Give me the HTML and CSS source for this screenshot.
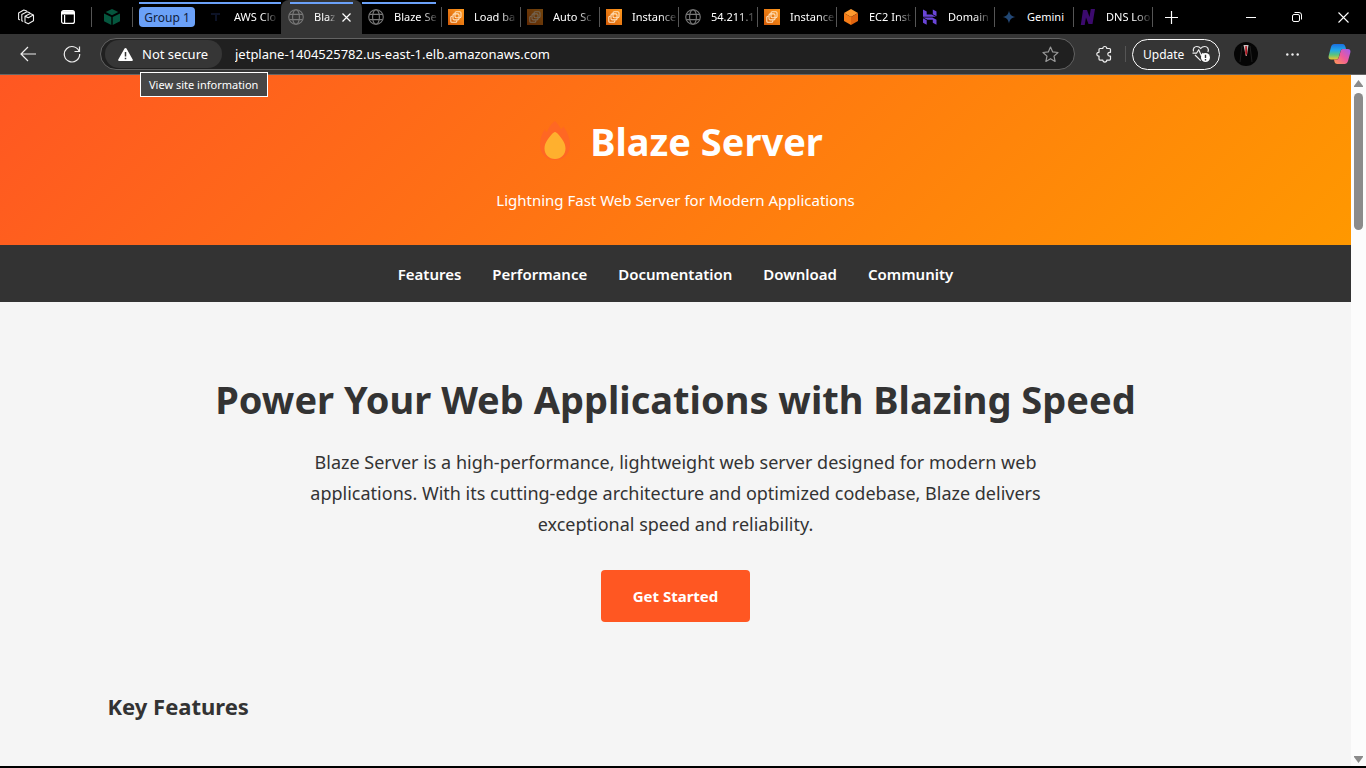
FILE: index.html
```html
<!DOCTYPE html>
<html lang="en">
<head>
<meta charset="utf-8">
<title>Blaze Server</title>
<meta name="viewport" content="width=device-width, initial-scale=1">
<link rel="stylesheet" href="styles.css">
</head>
<body>
<svg class="defs" aria-hidden="true">
  <defs>
    <linearGradient id="aws" x1="0" y1="1" x2="1" y2="0"><stop offset="0" stop-color="#d45b07"/><stop offset="1" stop-color="#ff9a1f"/></linearGradient>
    <linearGradient id="cpA" x1="0" y1="0" x2="0" y2="1"><stop offset="0" stop-color="#1b6fe0"/><stop offset=".4" stop-color="#22a9e8"/><stop offset=".7" stop-color="#5cc47c"/><stop offset="1" stop-color="#f3c52e"/></linearGradient>
    <linearGradient id="cpB" x1="1" y1="0" x2="0" y2="1"><stop offset="0" stop-color="#a05af0"/><stop offset=".5" stop-color="#ee5a9a"/><stop offset="1" stop-color="#ff9a52"/></linearGradient>
    <linearGradient id="gem" x1="0" y1="0" x2="1" y2="1"><stop offset="0" stop-color="#1c4468"/><stop offset="1" stop-color="#274a80"/></linearGradient>
    <symbol id="globe" viewBox="0 0 16 16"><g fill="none" stroke="#777" stroke-width="1.1"><circle cx="8" cy="8" r="7.3"/><ellipse cx="8" cy="8" rx="3.4" ry="7.3"/><path d="M1.3 5.4h13.4M1.3 10.6h13.4"/></g></symbol>
    <symbol id="ec2" viewBox="0 0 16 16"><path fill="url(#aws)" d="M0 0h16v16H0z"/><g fill="none" stroke="#ffe3c0" stroke-width="1.1"><rect x="7" y="2.8" width="6" height="6" rx="1.2"/><rect x="5" y="4.9" width="6" height="6" rx="1.2"/><path d="M4.600 7.200H3.800a1 1 0 0 0-1 1v4a1 1 0 0 0 1 1h4a1 1 0 0 0 1-1v-.8"/></g></symbol>
  </defs>
</svg>

<header class="browser">
  <div class="tabstrip">
    <button class="tool workspaces" aria-label="Workspaces"><svg width="18" height="18" viewBox="0 0 18 18" fill="none" stroke="#eee" stroke-width="1.1" stroke-linejoin="round" stroke-linecap="round"><path d="M8 8.200l5.300-2.700 3.200 1.400v5.800l-5.200 3L8 14.200zM8 8.200l3.300 1.500 5-2.600"/><path d="M5.800 13.200l-1-.5V6.500l5.200-2.800 2.800 1.100"/><path d="M2.600 11.700l-1-.5V5l5.200-3 2.800 1.100"/></svg></button>
    <button class="tool" aria-label="Tab actions"><svg width="14" height="14" viewBox="0 0 14 14" fill="none" stroke="#fff" stroke-width="1.200"><rect x=".6" y=".6" width="12.800" height="12.800" rx="2"/><path d="M1 2.800h12" stroke-width="3.400"/><path d="M3.600 5v8"/></svg></button>
    <button class="tool pinned" aria-label="Pinned tab"><svg width="16" height="16" viewBox="0 0 16 16" fill="#05573e"><path d="M8 0l6.300 3L8 6.200 1.700 3z"/><path d="M0 4.600l7.300 3.500V16L0 12.200zM16 4.600L8.700 8.100V16l7.300-3.800z"/></svg></button>
    <div class="group grouped"><button class="group-chip">Group 1</button>
      <a class="tab-link first" href="#"><svg class="fav" viewBox="0 0 16 16"><path fill="#0d1326" d="M3 4h9v2H9v6H7V6H3z"/></svg><span class="label">AWS Clo</span></a>
    </div>
    <div class="tab active grouped"><a class="tab-link" href="#"><svg class="fav"><use href="#globe"/></svg><span class="label short">Blaz</span></a><button class="close" aria-label="Close tab"><svg width="9" height="9" viewBox="0 0 9 9" stroke="#fff" stroke-width="1.200"><path d="M.5.500l8 8M8.500.500l-8 8"/></svg></button></div>
    <div class="tab grouped last"><a class="tab-link" href="#"><svg class="fav"><use href="#globe"/></svg><span class="label">Blaze Se</span></a></div>
    <div class="tab"><a class="tab-link" href="#"><svg class="fav"><use href="#ec2"/></svg><span class="label">Load ba</span></a></div>
    <div class="tab"><a class="tab-link" href="#"><svg class="fav dim"><use href="#ec2"/></svg><span class="label">Auto Sc</span></a></div>
    <div class="tab"><a class="tab-link" href="#"><svg class="fav"><use href="#ec2"/></svg><span class="label">Instance</span></a></div>
    <div class="tab"><a class="tab-link" href="#"><svg class="fav"><use href="#globe"/></svg><span class="label">54.211.1</span></a></div>
    <div class="tab"><a class="tab-link" href="#"><svg class="fav"><use href="#ec2"/></svg><span class="label">Instance</span></a></div>
    <div class="tab"><a class="tab-link" href="#"><svg class="fav" viewBox="0 0 16 16"><path fill="#ff9a2e" d="M8 0l7 4-7 4-7-4z"/><path fill="#f57c17" d="M1 4l7 4v8l-7-4z"/><path fill="#e0640f" d="M15 4L8 8v8l7-4z"/></svg><span class="label">EC2 Inst</span></a></div>
    <div class="tab"><a class="tab-link" href="#"><svg class="fav" viewBox="0 0 16 16" fill="#6a45d8"><path d="M1 .5l3.700 2v3h5l4.300 2.200H1zM10.800.5l3.700 2v4.700l-3.700-2zM1 8.500h9.300l4.200 2.300v5l-3.700-2v-3H5.500zM1 9.300l3.700 2v4.500l-3.700-2z"/></svg><span class="label">Domain</span></a></div>
    <div class="tab"><a class="tab-link" href="#"><svg class="fav" viewBox="0 0 16 16"><path fill="url(#gem)" d="M8 1.500c.7 4 2.500 5.800 6.500 6.500-4 .7-5.800 2.500-6.500 6.500C7.300 10.500 5.500 8.700 1.500 8 5.500 7.300 7.300 5.500 8 1.500z"/></svg><span class="label plain">Gemini</span></a></div>
    <div class="tab"><a class="tab-link" href="#"><svg class="fav" viewBox="0 0 16 16"><path fill="#3c0a6e" d="M3 1h4l2.500 7L10.800 0H15l-2.500 15h-4L6 8.500 4.700 16H.8z"/></svg><span class="label">DNS Loo</span></a></div>
    <button class="tool new" aria-label="New tab"><svg width="13" height="13" viewBox="0 0 13 13" stroke="#fff" stroke-width="1.200"><path d="M6.500 0v13M0 6.500h13"/></svg></button>
    <div class="window">
      <button class="tool" aria-label="Minimize"><svg width="10" height="10" viewBox="0 0 10 10" stroke="#fff"><path d="M0 5.500h10"/></svg></button>
      <button class="tool" aria-label="Restore"><svg width="10" height="10" viewBox="0 0 10 10" fill="none" stroke="#fff"><rect x=".5" y="2.500" width="7" height="7" rx="1.500"/><path d="M2.500.500H7A2.500 2.500 0 0 1 9.500 3v4.500"/></svg></button>
      <button class="tool" aria-label="Close"><svg width="11" height="11" viewBox="0 0 11 11" stroke="#fff" stroke-width="1.100"><path d="M.5.500l10 10M10.500.500l-10 10"/></svg></button>
    </div>
  </div>

  <div class="toolbar">
    <button class="tool" aria-label="Back"><svg width="17" height="16" viewBox="0 0 17 16" fill="none" stroke="#eee" stroke-width="1.200"><path d="M16 8H1M8 1L1 8l7 7"/></svg></button>
    <button class="tool" aria-label="Refresh"><svg width="18" height="18" viewBox="0 0 18 18" fill="none" stroke="#eee" stroke-width="1.200"><path d="M16.200 6.500A7.700 7.700 0 1 0 16.700 9M16.500 1.500v5h-5"/></svg></button>
    <div class="address">
      <button class="security"><svg width="15" height="13" viewBox="0 0 15 13"><path fill="#fff" d="M7.500 0c.4 0 .8.200 1 .600l6.200 11c.4.700 0 1.400-.8 1.400H1.100c-.8 0-1.200-.7-.8-1.400l6.200-11c.2-.4.600-.600 1-.600z"/><path stroke="#333" stroke-width="1.500" d="M7.500 4v4.500M7.500 9.800v1.500"/></svg><span>Not secure</span></button>
      <input class="url" type="text" aria-label="Address" value="jetplane-1404525782.us-east-1.elb.amazonaws.com">
      <button class="tool star" aria-label="Add to favorites"><svg width="17" height="17" viewBox="0 0 17 17" fill="none" stroke="#999" stroke-width="1.200" stroke-linejoin="round"><path d="M8.500 1l2.200 4.900 5.300.6-4 3.600 1.100 5.300-4.600-2.700-4.600 2.700L5 10.100 1 6.500l5.300-.6z"/></svg></button>
      <div class="tooltip" role="tooltip">View site information</div>
    </div>
    <button class="tool ext" aria-label="Extensions"><svg width="17" height="18" viewBox="0 0 17 18" fill="none" stroke="#eee" stroke-width="1.200" stroke-linejoin="round"><path d="M4 3.500h2.800a2 2 0 0 1 4 0h2.700a1 1 0 0 1 1 1v2.800h-.8a1.900 1.900 0 0 0 0 3.800h.8v3a1 1 0 0 1-1 1h-2.700a2 2 0 0 1-4 0H4a1 1 0 0 1-1-1v-3h-.3a1.900 1.900 0 0 1 0-3.800H3V4.500a1 1 0 0 1 1-1z"/></svg></button>
    <button class="update"><span>Update</span><svg width="19" height="18" viewBox="0 0 19 18" fill="none" stroke="#eee" stroke-width="1.200" stroke-linejoin="round"><path d="M1.500 6.500C.6 3.500 2.500 1.500 4.800 1.500c2 0 3.200 1 3.900 2 .7-1 2-2 4-2 2.700 0 4.600 2.500 3.200 5.500M3 10l5.700 5.700M.5 8.200h4l2.200-3.500L9.500 11 11 8"/><circle cx="13.500" cy="12.500" r="4.500" fill="#fff" stroke="none"/><path stroke="#333" stroke-width="1.400" stroke-linejoin="miter" d="M13.500 9.800v3.200M13.500 14v1.400"/></svg></button>
    <button class="tool profile" aria-label="Profile"><svg width="24" height="24" viewBox="0 0 24 24"><circle cx="12" cy="12" r="12" fill="#050505"/><path stroke="#202020" fill="none" d="M8 4L6 20M16 4l2 16"/><path fill="#c9c4c4" d="M9.500 3h5L12.800 14h-1z"/><path fill="#b01822" d="M11.300 4h1.500l.5 7-1.100 3-1-3z"/></svg></button>
    <button class="tool dots" aria-label="Settings and more"><svg width="13" height="3" viewBox="0 0 13 3" fill="#eee"><circle cx="1.300" cy="1.500" r="1.200"/><circle cx="6.500" cy="1.500" r="1.200"/><circle cx="11.700" cy="1.500" r="1.200"/></svg></button>
    <button class="tool copilot" aria-label="Copilot"><svg width="23" height="22" viewBox="0 0 23 22"><path fill="url(#cpA)" d="M6.500 1h8c2 0 2.600 1.500 3 3l.5 2h-3c-1.600 0-2.200 1-2.600 2.500L10.800 14c-.5 1.800-1.500 2.600-3.300 2.600H3.200C1 16.600.1 15 .7 12.800L3 4c.5-2 1.700-3 3.500-3z"/><path fill="url(#cpB)" d="M16.500 21h-7c-2 0-2.900-1.200-3.200-3l-.3-1.400h2c1.700 0 2.600-1 3-2.600L12.700 8c.5-1.500 1.300-2 2.800-2h4.300c2.200 0 3.100 1.600 2.500 3.800L20 18c-.6 2-1.700 3-3.500 3z"/></svg></button>
  </div>
</header>

<div class="viewport">
  <div class="page">
    <header class="banner">
      <h1><svg class="flame" viewBox="0 0 30 40"><path fill="#ff6723" d="M15 0c3 3 4 5 6 8 2-1 2-2 2-3 4 5 7 12 7 19 0 9-7 15-15 15S0 33 0 24C0 18 2 12 5 8c0 2 1 3 2 3C9 6 11 3 15 0z"/><path fill="#ffb02e" d="M15 11c-1 0-2 1-3 2-4 5-7.500 9-7.500 14.500C4.500 33.500 9 38 15 38s10.500-4.500 10.500-10.500C25.500 22 22 18 18 13c-1-1-2-2-3-2z"/></svg><span>Blaze Server</span></h1>
      <p>Lightning Fast Web Server for Modern Applications</p>
    </header>
    <nav class="menu">
      <a href="#">Features</a><a href="#">Performance</a><a href="#">Documentation</a><a href="#">Download</a><a href="#">Community</a>
    </nav>
    <main class="content">
      <section class="hero">
        <h2>Power Your Web Applications with Blazing Speed</h2>
        <p>Blaze Server is a high-performance, lightweight web server designed for modern web applications. With its cutting-edge architecture and optimized codebase, Blaze delivers exceptional speed and reliability.</p>
        <a class="cta" href="#">Get Started</a>
      </section>
      <section><h3>Key Features</h3></section>
    </main>
  </div>
  <div class="scrollbar" aria-hidden="true">
    <svg width="9" height="7" viewBox="0 0 9 7"><path fill="#8b8b8b" d="M4.500 0L9 6v1H0V6z"/></svg>
    <div class="thumb"></div>
    <svg class="down" width="9" height="7" viewBox="0 0 9 7"><path fill="#8b8b8b" d="M4.500 7L9 1V0H0v1z"/></svg>
  </div>
</div>
</body>
</html>
```
FILE: styles.css
```css
* { box-sizing: border-box; }
body {
  margin: 0;
  height: 100vh;
  display: flex;
  flex-direction: column;
  overflow: hidden;
  border-bottom: 2px solid #000;
  font-family: "Noto Sans", "Open Sans", sans-serif;
  background: #f5f5f5;
}
h1, h2, h3, p { margin: 0; }
a { color: inherit; text-decoration: none; }
button { font: inherit; color: inherit; border: 0; padding: 0; background: none; }
svg { display: block; flex: none; }
.defs { position: absolute; width: 0; height: 0; }

/* Browser frame */
.browser { flex: none; color: #fff; font-size: 12px; background: #353535; border-bottom: 1px solid #666; }
.tabstrip { display: flex; height: 34px; background: #000; }
.tool { display: flex; flex: none; align-items: center; justify-content: center; width: 44px; }
.workspaces { width: 52px; }
.tabstrip .workspaces + .tool { width: 32px; }
.tabstrip .pinned { width: 42px; margin-left: 7px; background: linear-gradient(#555, #555) left / 1px 20px no-repeat, linear-gradient(#555, #555) right / 1px 20px no-repeat; }
.group { display: flex; align-items: center; width: 148px; padding-left: 6px; flex: none; }
.group-chip { width: 56px; height: 20px; border-radius: 4px; background: #6ba1f8; color: #10203c; }
.tab { display: flex; flex: none; align-items: center; width: 79px; background: linear-gradient(#555, #555) right / 1px 20px no-repeat; }
.tab-link { display: flex; align-items: center; gap: 10px; padding-left: 6px; min-width: 0; flex: 1; }
.group .first { padding-left: 13px; }
.fav { width: 16px; height: 16px; }
.dim { opacity: .45; }
.label { font-size: 11px; white-space: nowrap; line-height: 20px; mask-image: linear-gradient(90deg, #000 65%, transparent 105%); }
.plain { mask-image: none; }
.grouped { background: linear-gradient(#6ba1f8, #6ba1f8) 6px 2px / 100% 2px no-repeat; }
.tab.last { width: 80px; background: linear-gradient(#6ba1f8, #6ba1f8) 0 2px / 74px 2px no-repeat, linear-gradient(#555, #555) right / 1px 20px no-repeat; }
.tab.active { width: 81px; border-radius: 8px 8px 0 0; background: linear-gradient(#6ba1f8, #6ba1f8) 9px 2px / 63px 2px no-repeat #353535; padding: 0 11px 0 1px; }
.close { padding: 3px 0; }
.new { width: 36px; }
.window { display: flex; margin-left: auto; }
.window .tool { width: 46px; }

.toolbar { display: flex; align-items: center; height: 40px; padding-left: 6px; }
.address { position: relative; display: flex; align-items: center; flex: 1; min-width: 0; height: 32px; margin-left: 6px; padding: 0 2px 0 4px; border: 1px solid #636363; border-radius: 16px; background: #202020; }
.security { display: flex; align-items: center; gap: 9px; flex: none; width: 117px; height: 28px; padding-left: 13px; border-radius: 14px; background: #363636; font-size: 13px; }
.url { flex: 1; min-width: 0; margin-left: 12px; padding: 0 1px; border: 0; background: none; color: #fff; font: inherit; font-size: 13px; }
.tooltip { position: absolute; z-index: 2; left: 39px; top: 33px; padding: 0 9px 0 8px; border: 1px solid #fff; background: #464646; font-size: 11px; line-height: 23px; white-space: nowrap; }
.ext { width: 51px; padding-left: 7px; background: linear-gradient(#555, #555) right / 1px 16px no-repeat; }
.update { display: flex; align-items: center; justify-content: space-between; width: 88px; height: 31px; margin-left: 6px; padding: 0 8px 0 10px; border: 1px solid #fff; border-radius: 16px; }
.profile { width: 52px; }
.dots { width: 40px; }
.copilot { width: 54px; }

/* Document area */
.viewport { display: flex; flex: 1; min-height: 0; }
.page { flex: 1; min-width: 0; overflow: hidden; color: #333; font-size: 15px; line-height: 26px; }
.banner { padding: 32px; color: #fff; text-align: center; background: linear-gradient(135deg, #ff5722, #ff9800); }
.banner h1 { display: flex; align-items: center; justify-content: center; gap: 20px; margin-bottom: 14px; padding: 2px 0 0 12px; font-size: 38px; line-height: 64px; }
.flame { width: 30px; height: 40px; }
.menu { display: flex; justify-content: center; gap: 31px; padding: 17px 16px 15px; color: #fff; background: #333; font-weight: 600; line-height: 25px; }
.content { max-width: 1200px; margin: 0 auto; padding: 0 32px; }
.hero { padding: 65px 0; text-align: center; }
.hero h2 { margin-bottom: 16px; font-size: 38px; line-height: 64px; }
.hero p { max-width: 800px; margin: 0 auto 30px; font-size: 18px; line-height: 31px; }
.cta { display: inline-block; padding: 13px 32px; border-radius: 4px; color: #fff; background: #ff5722; font-weight: 700; }
.content h3 { font-size: 22px; line-height: 38px; }
.scrollbar { display: flex; flex-direction: column; align-items: center; flex: none; width: 15px; padding: 5px 0 3px; background: #fcfcfc; }
.thumb { width: 9px; height: 20%; margin-top: 6px; border-radius: 5px; background: #8b8b8b; }
.down { margin-top: auto; }
```
